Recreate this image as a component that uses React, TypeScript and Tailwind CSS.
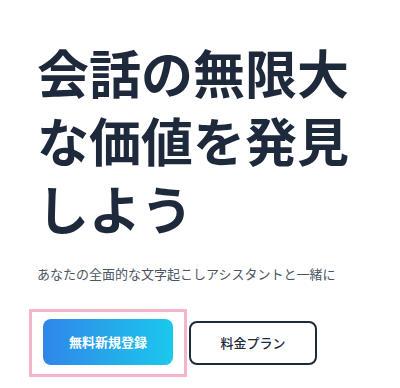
import React from "react";

const App = () => {
    return (
        <div
            className="min-h-[388px] w-[400px] bg-white pl-[37px] pt-[38px]"
            style={{ fontFamily: '"Noto Sans CJK JP", "Noto Sans", sans-serif' }}
        >
            <h1 className="text-[52px] font-bold leading-[68px] text-[#1e293b]">
                会話の無限大
                <br />
                な価値を発見
                <br />
                しよう
            </h1>
            <p className="mt-[22px] text-[13px] leading-5 text-[#4b5563]">
                あなたの全面的な文字起こしアシスタントと一緒に
            </p>
            <div className="-ml-[8px] mt-[25px] flex items-center">
                <div className="border-[3px] border-[#f4b4c9] px-[11px] pb-[9px] pt-[7px]">
                    <button className="flex h-[46px] w-[130px] items-center justify-center rounded-lg bg-gradient-to-r from-[#2f86e8] to-[#1ac8ec] text-[13px] font-bold text-white">
                        無料新規登録
                    </button>
                </div>
                <button className="ml-[2px] flex h-[44px] w-[128px] items-center justify-center rounded-lg border-2 border-[#1e293b] bg-white text-[13px] font-medium text-[#1e293b]">
                    料金プラン
                </button>
            </div>
        </div>
    );
};

export default App;
